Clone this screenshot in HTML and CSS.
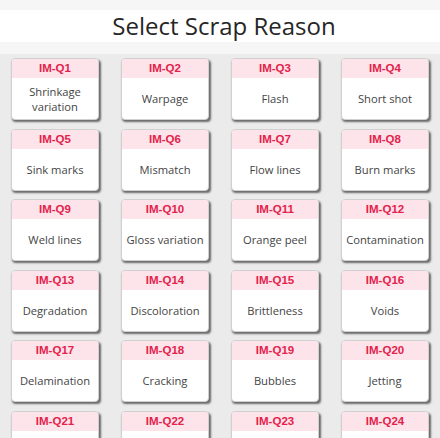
FILE: index.html
```html
<!DOCTYPE html>
<html>
<head>
<meta charset="utf-8">
<link rel="stylesheet" href="styles.css">
</head>
<body>
<div class="page">
  <header class="top">
    <h1 class="title">Select Scrap Reason</h1>
  </header>
  <main class="grid">
    <button class="card"><span class="code">IM-Q1</span><span class="name">Shrinkage variation</span></button>
    <button class="card"><span class="code">IM-Q2</span><span class="name">Warpage</span></button>
    <button class="card"><span class="code">IM-Q3</span><span class="name">Flash</span></button>
    <button class="card"><span class="code">IM-Q4</span><span class="name">Short shot</span></button>
    <button class="card"><span class="code">IM-Q5</span><span class="name">Sink marks</span></button>
    <button class="card"><span class="code">IM-Q6</span><span class="name">Mismatch</span></button>
    <button class="card"><span class="code">IM-Q7</span><span class="name">Flow lines</span></button>
    <button class="card"><span class="code">IM-Q8</span><span class="name">Burn marks</span></button>
    <button class="card"><span class="code">IM-Q9</span><span class="name">Weld lines</span></button>
    <button class="card"><span class="code">IM-Q10</span><span class="name">Gloss variation</span></button>
    <button class="card"><span class="code">IM-Q11</span><span class="name">Orange peel</span></button>
    <button class="card"><span class="code">IM-Q12</span><span class="name">Contamination</span></button>
    <button class="card"><span class="code">IM-Q13</span><span class="name">Degradation</span></button>
    <button class="card"><span class="code">IM-Q14</span><span class="name">Discoloration</span></button>
    <button class="card"><span class="code">IM-Q15</span><span class="name">Brittleness</span></button>
    <button class="card"><span class="code">IM-Q16</span><span class="name">Voids</span></button>
    <button class="card"><span class="code">IM-Q17</span><span class="name">Delamination</span></button>
    <button class="card"><span class="code">IM-Q18</span><span class="name">Cracking</span></button>
    <button class="card"><span class="code">IM-Q19</span><span class="name">Bubbles</span></button>
    <button class="card"><span class="code">IM-Q20</span><span class="name">Jetting</span></button>
    <button class="card"><span class="code">IM-Q21</span><span class="name">Stress marks</span></button>
    <button class="card"><span class="code">IM-Q22</span><span class="name">Sticking</span></button>
    <button class="card"><span class="code">IM-Q23</span><span class="name">Ejector marks</span></button>
    <button class="card"><span class="code">IM-Q24</span><span class="name">Other</span></button>
  </main>
</div>
</body>
</html>
```

FILE: styles.css
```css
html, body {
  margin: 0;
  padding: 0;
  overflow: hidden;
}
body {
  background: #ebebeb;
  font-family: "Open Sans", "Liberation Sans", sans-serif;
}
.page {
  width: 440px;
  height: 438px;
  overflow: hidden;
}
.top {
  background: #f6f6f6;
  padding: 10px 0 12px;
}
.title {
  margin: 0;
  padding-left: 8px;
  background: #ffffff;
  height: 32px;
  line-height: 32px;
  text-align: center;
  font-family: "Open Sans", sans-serif;
  font-weight: 400;
  font-size: 24px;
  color: #262626;
}
.grid {
  display: grid;
  grid-template-columns: repeat(4, 88px);
  grid-auto-rows: 62px;
  column-gap: 22px;
  row-gap: 8.6px;
  padding: 4px 11px;
}
.card {
  display: flex;
  flex-direction: column;
  margin: 0;
  padding: 0;
  background: #ffffff;
  border: 1px solid #d0d0d0;
  border-radius: 4px;
  box-shadow: 1.5px 2px 2px rgba(0, 0, 0, 0.55);
  overflow: hidden;
  font: inherit;
  cursor: pointer;
}
.code {
  display: block;
  height: 19px;
  line-height: 19px;
  background: #fde4ea;
  color: #e3224c;
  font-family: "Liberation Sans", Arial, sans-serif;
  font-weight: 700;
  font-size: 11.5px;
  text-align: center;
}
.name {
  flex: 1;
  display: flex;
  align-items: center;
  justify-content: center;
  text-align: center;
  padding: 0 2px;
  font-family: "Open Sans", sans-serif;
  font-size: 11.2px;
  line-height: 15px;
  color: #444444;
}
```
